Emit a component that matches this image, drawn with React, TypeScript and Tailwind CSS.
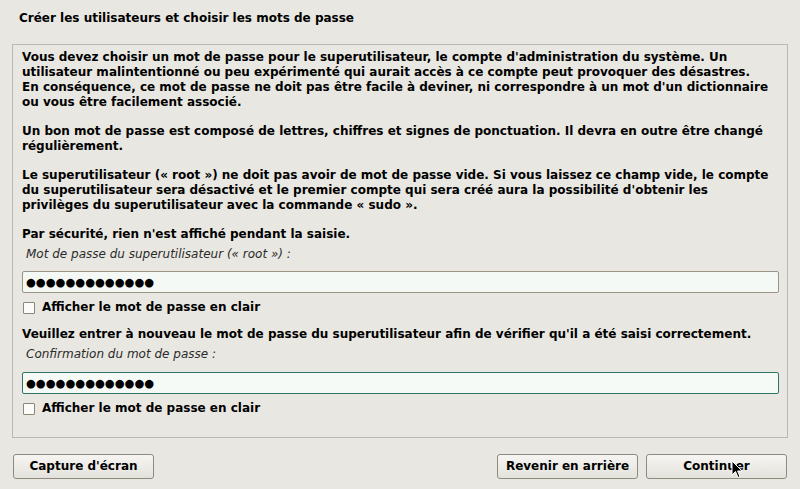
import React from "react";

const dots = "●●●●●●●●●●●●●";

const Checkbox = ({ label }: { label: string }) => (
  <label className="flex items-center gap-[7px] h-[15px]">
    <span className="ml-[1px] size-[12px] border border-[#8d877a] bg-[#fbfbf9] rounded-[1px]" />
    <span className="font-bold">{label}</span>
  </label>
);

const Button = ({ label, w }: { label: string; w: string }) => (
  <button
    className={`${w} h-[25px] rounded-[3px] border border-[#8f8a7d] bg-gradient-to-b from-[#f6f5f2] to-[#e4e2dc] font-bold text-[12px] text-black`}
  >
    {label}
  </button>
);

const Cursor = () => (
  <svg
    className="absolute left-[731px] top-[460px]"
    width="12"
    height="19"
    viewBox="0 0 12 19"
  >
    <path
      d="M1 1 L1 15 L4.5 11.5 L7 17.5 L9 16.6 L6.6 11 L11 11 Z"
      fill="#000"
      stroke="#fff"
      strokeWidth="1"
    />
  </svg>
);

export default function App() {
  return (
    <div className="relative w-[800px] h-[489px] bg-[#e8e7e1] text-black text-[12px] leading-[15px] font-['DejaVu_Sans',sans-serif] flex flex-col overflow-hidden">
      <h1 className="h-[44px] pt-[11px] pl-[19px] font-bold">
        Créer les utilisateurs et choisir les mots de passe
      </h1>

      <div className="mx-[12px] h-[394px] border border-[#bdb9ae] pt-[5px] pl-[9px] pr-[8px] font-bold whitespace-nowrap">
        <p>
          Vous devez choisir un mot de passe pour le superutilisateur, le compte d'administration du système. Un
          <br />
          utilisateur malintentionné ou peu expérimenté qui aurait accès à ce compte peut provoquer des désastres.
          <br />
          En conséquence, ce mot de passe ne doit pas être facile à deviner, ni correspondre à un mot d'un dictionnaire
          <br />
          ou vous être facilement associé.
        </p>
        <p className="mt-[14px]">
          Un bon mot de passe est composé de lettres, chiffres et signes de ponctuation. Il devra en outre être changé
          <br />
          régulièrement.
        </p>
        <p className="mt-[14px]">
          Le superutilisateur (« root ») ne doit pas avoir de mot de passe vide. Si vous laissez ce champ vide, le compte
          <br />
          du superutilisateur sera désactivé et le premier compte qui sera créé aura la possibilité d'obtenir les
          <br />
          privilèges du superutilisateur avec la commande « sudo ».
        </p>
        <p className="mt-[14px]">Par sécurité, rien n'est affiché pendant la saisie.</p>

        <div className="mt-[5px] pl-[4px] italic font-normal text-[#2b2b2b]">
          Mot de passe du superutilisateur (« root ») :
        </div>
        <div className="mt-[9px] h-[22px] rounded-[2px] border border-[#9b9385] bg-[#f5f9f5] flex items-center pl-[3px] text-[11.3px]">
          {dots}
        </div>
        <div className="mt-[7px]">
          <Checkbox label="Afficher le mot de passe en clair" />
        </div>

        <p className="mt-[12px]">
          Veuillez entrer à nouveau le mot de passe du superutilisateur afin de vérifier qu'il a été saisi correctement.
        </p>
        <div className="mt-[5px] pl-[4px] italic font-normal text-[#2b2b2b]">
          Confirmation du mot de passe :
        </div>
        <div className="mt-[10px] h-[22px] rounded-[2px] border border-[#2f7566] bg-[#f5faf7] flex items-center pl-[3px] text-[11.3px]">
          {dots}
        </div>
        <div className="mt-[7px]">
          <Checkbox label="Afficher le mot de passe en clair" />
        </div>
      </div>

      <div className="mt-[16px] mx-[13px] flex items-center">
        <Button label="Capture d'écran" w="w-[141px]" />
        <div className="flex-1" />
        <Button label="Revenir en arrière" w="w-[141px]" />
        <div className="w-[8px]" />
        <Button label="Continuer" w="w-[141px]" />
      </div>

      <Cursor />
    </div>
  );
}
